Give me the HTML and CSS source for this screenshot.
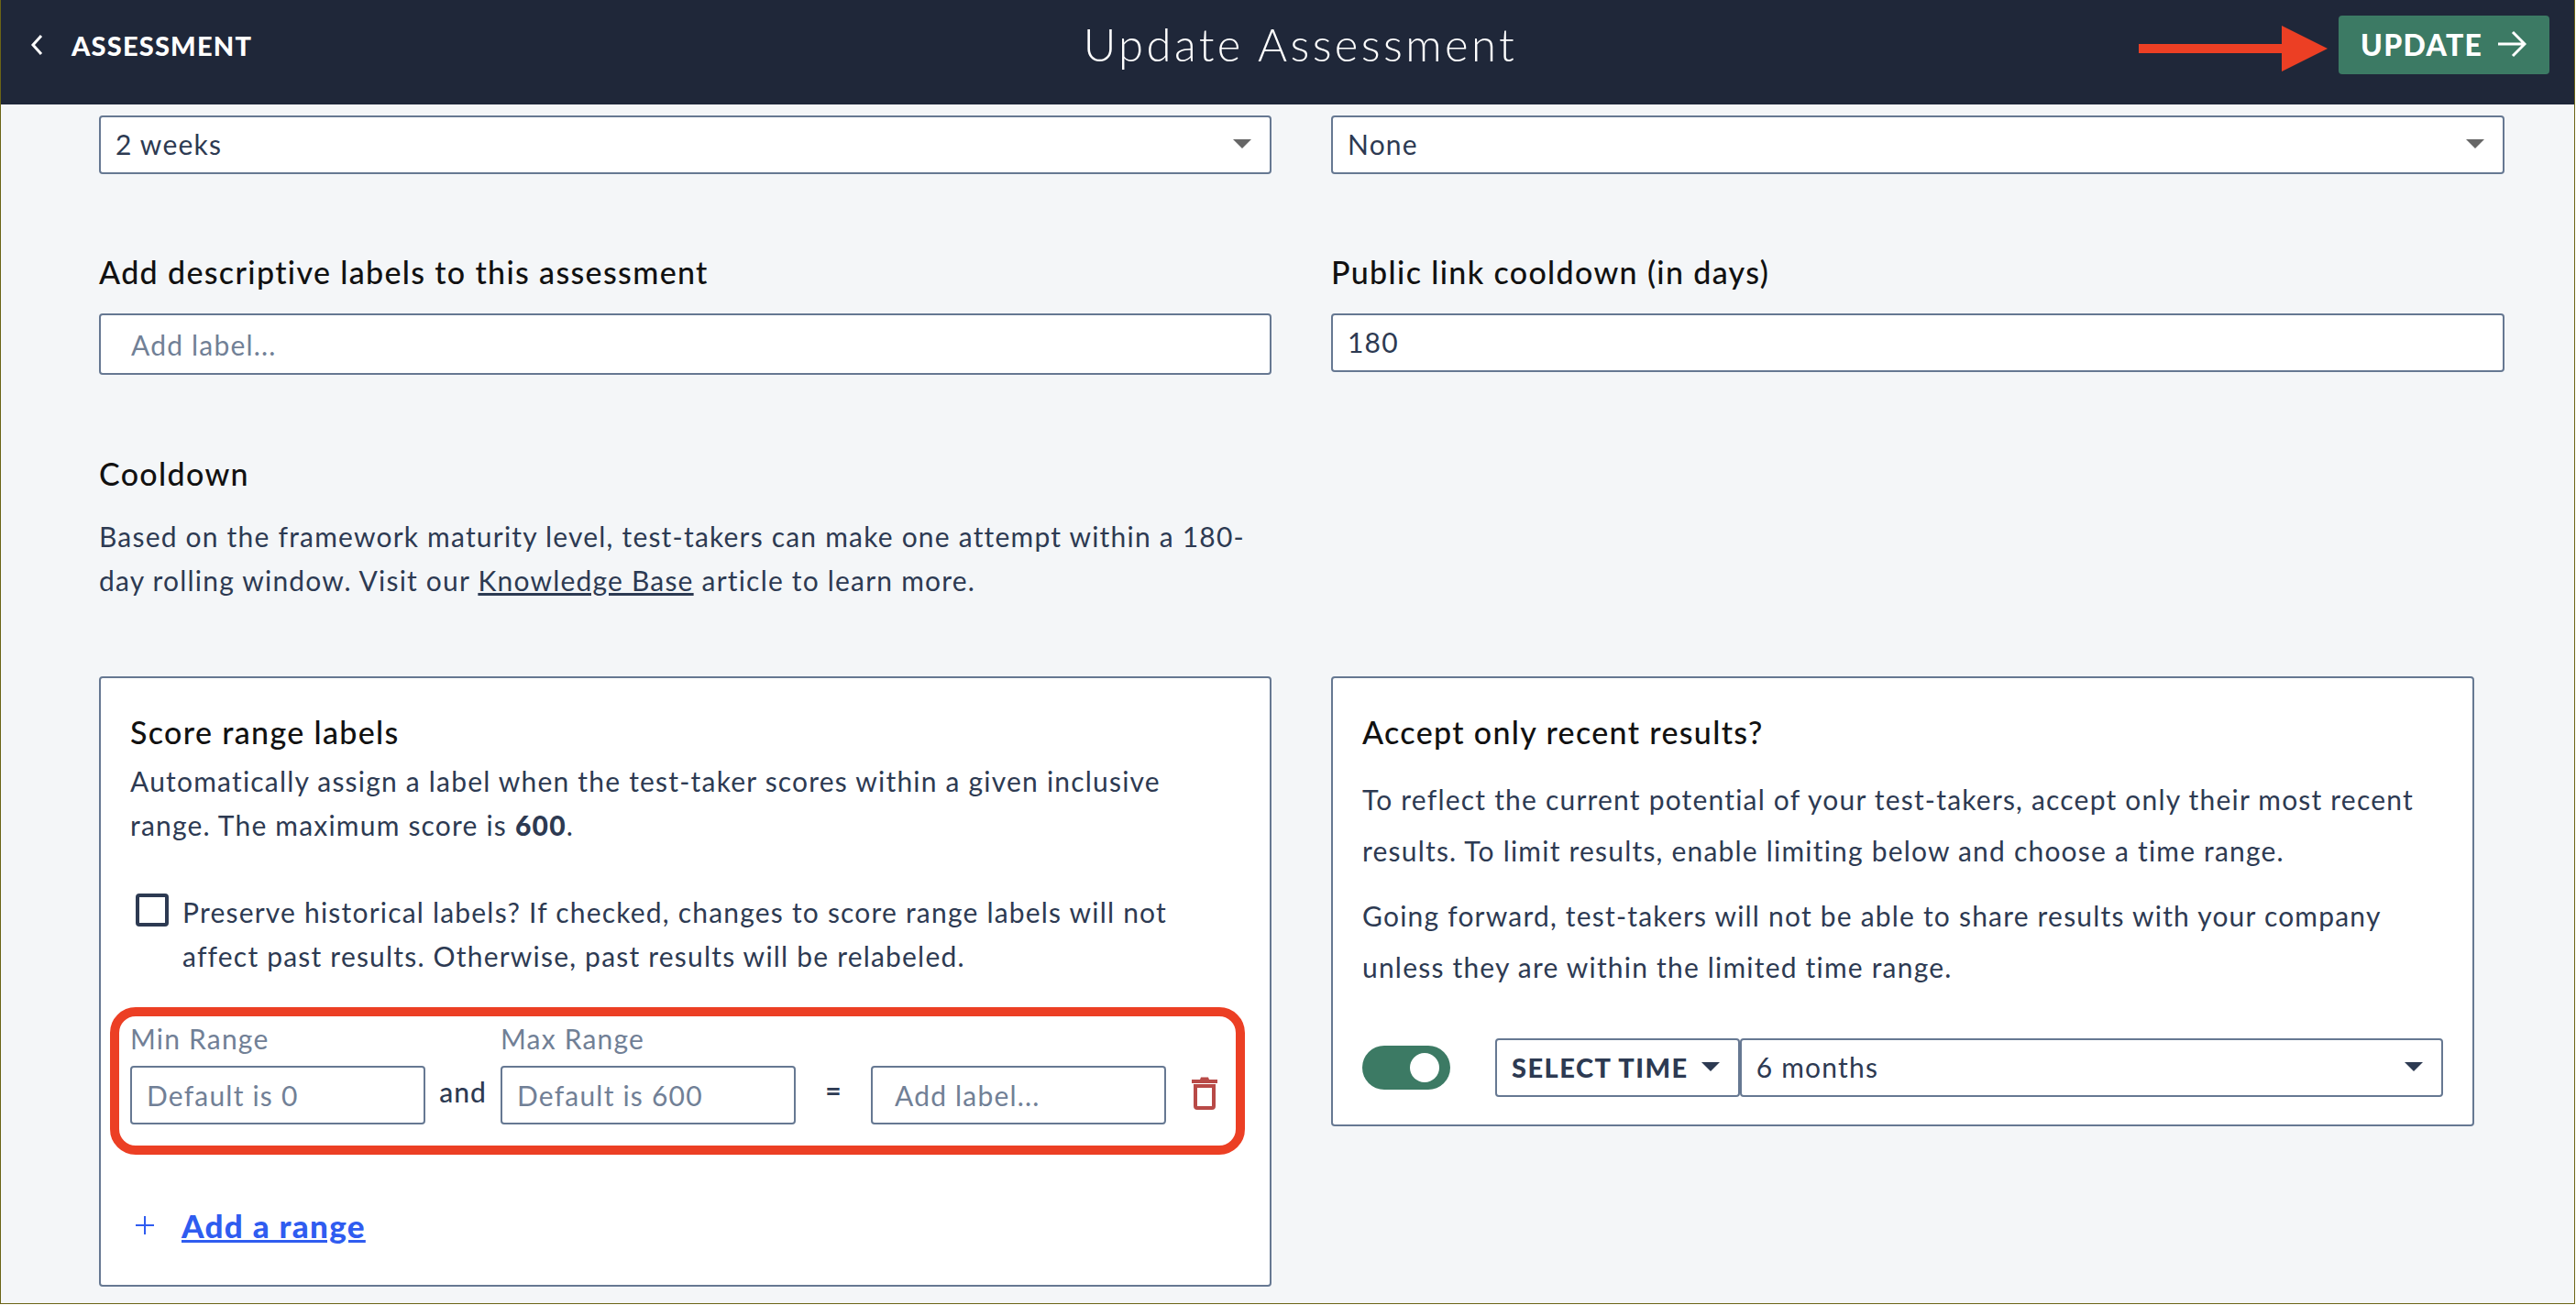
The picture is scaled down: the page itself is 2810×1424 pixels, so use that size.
FILE: index.html
```html
<!DOCTYPE html>
<html lang="en">
<head>
<meta charset="utf-8">
<title>Update Assessment</title>
<link rel="stylesheet" href="styles.css">
</head>
<body>
<div class="frame">
  <header class="topbar">
    <a class="back">
      <svg class="back-icon" width="14" height="24" viewBox="0 0 14 24"><path d="M12 2 3 12l9 10" fill="none" stroke="#fff" stroke-width="3"/></svg>
      <span>ASSESSMENT</span>
    </a>
    <h1 class="title">Update Assessment</h1>
    <button class="update">UPDATE
      <svg width="32" height="30" viewBox="0 0 32 30"><path d="M1 15h28M17 2l13 13-13 13" fill="none" stroke="#fff" stroke-width="3"/></svg>
    </button>
    <svg class="callout-arrow" width="206" height="50" viewBox="0 0 206 50"><path d="M0 20h156V0l50 25-50 25V30H0z" fill="#ec3f24"/></svg>
  </header>
  <main class="content">
    <section class="grid two top-row">
      <div class="select"><span>2 weeks</span><i class="tri grey"></i></div>
      <div class="select"><span>None</span><i class="tri grey"></i></div>
    </section>
    <section class="grid two label-row">
      <div>
        <label class="label">Add descriptive labels to this assessment</label>
        <input class="input tall" placeholder="Add label...">
      </div>
      <div>
        <label class="label">Public link cooldown (in days)</label>
        <input class="input value" value="180">
      </div>
    </section>
    <section class="cooldown">
      <h2 class="label">Cooldown</h2>
      <p class="para">Based on the framework maturity level, test-takers can make one attempt within a 180-day rolling window. Visit our <a class="kb">Knowledge Base</a> article to learn more.</p>
    </section>
    <section class="grid two boxes">
      <div class="box left-box">
        <h3 class="label box-title">Score range labels</h3>
        <p class="para">Automatically assign a label when the test-taker scores within a given inclusive range. The maximum score is <b>600</b>.</p>
        <div class="check-row">
          <span class="check"></span>
          <p class="para">Preserve historical labels? If checked, changes to score range labels will not affect past results. Otherwise, past results will be relabeled.</p>
        </div>
        <div class="range-row">
          <div class="field"><span class="field-label">Min Range</span><input class="input small" placeholder="Default is 0"></div>
          <span class="and">and</span>
          <div class="field"><span class="field-label">Max Range</span><input class="input small" placeholder="Default is 600"></div>
          <span class="eq">=</span>
          <div class="field"><input class="input small wide-pad" placeholder="Add label..."></div>
          <svg class="trash" width="28" height="36" viewBox="0 0 28 36"><path d="M0 3h9l1-2.500h8L19 3h9v4H0z" fill="#b84a47"/><path d="M4 10h20v22a2 2 0 0 1-2 2H6a2 2 0 0 1-2-2z" fill="none" stroke="#b84a47" stroke-width="4"/></svg>
        </div>
        <div class="callout-box"></div>
        <div class="add-range">
          <svg width="20" height="20" viewBox="0 0 20 20"><path d="M10 0v20M0 10h20" stroke="#2f5cf0" stroke-width="2" fill="none"/></svg>
          <a class="add-link">Add a range</a>
        </div>
      </div>
      <div class="box right-box">
        <h3 class="label box-title">Accept only recent results?</h3>
        <p class="para wide first">To reflect the current potential of your test-takers, accept only their most recent results. To limit results, enable limiting below and choose a time range.</p>
        <p class="para wide">Going forward, test-takers will not be able to share results with your company unless they are within the limited time range.</p>
        <div class="limit-row">
          <span class="toggle"><span class="knob"></span></span>
          <div class="time-btn"><span>SELECT TIME</span><i class="tri dark"></i></div>
          <div class="select months"><span>6 months</span><i class="tri dark"></i></div>
        </div>
      </div>
    </section>
  </main>
</div>
</body>
</html>
```
FILE: styles.css
```css
* { box-sizing: border-box; }
html, body { margin: 0; background: #fff; }
body { font-family: Lato, "Open Sans", sans-serif; color: #2d3a52; }
.frame {
  position: relative;
  width: 2809px;
  height: 1423px;
  background: #f4f6f8;
  border: 1px solid #6b6416;
  border-top: 0;
  overflow: hidden;
}
.topbar {
  position: relative;
  height: 114px;
  background: #1f2739;
  display: flex;
  align-items: center;
  justify-content: space-between;
  padding: 0 27px 16px 32px;
  color: #fff;
}
.back { display: flex; align-items: center; gap: 31px; font-size: 29px; font-weight: 900; letter-spacing: 1.2px; }
.title {
  position: absolute;
  left: 0; right: 0; top: 19px;
  margin: 0;
  text-align: center;
  font-size: 49px;
  line-height: 58px;
  font-weight: 300;
  letter-spacing: 3.4px;
  padding-left: 28px;
}
.update {
  width: 230px;
  height: 64px;
  background: #3c7a64;
  color: #fff;
  border: 0;
  border-radius: 4px;
  font: 900 32px Lato, sans-serif;
  letter-spacing: 1.3px;
  display: flex;
  align-items: center;
  gap: 16px;
  padding: 0 0 2px 24px;
}
.callout-arrow { position: absolute; left: 2332px; top: 28px; }
.content { padding: 12px 75px 0 107px; }
.grid.two { display: grid; grid-template-columns: 1279px 1280px; column-gap: 65px; }
.select {
  height: 64px;
  background: #fff;
  border: 2px solid #667892;
  border-radius: 4px;
  display: flex;
  align-items: center;
  justify-content: space-between;
  padding: 0 20px 2px 16px;
  font-size: 30px;
  letter-spacing: 1.2px;
}
.tri { width: 0; height: 0; border-left: 10px solid transparent; border-right: 10px solid transparent; border-top: 10px solid; }
.tri.grey { border-top-color: #666; }
.tri.dark { border-top-color: #2d3a52; }
.label-row { margin-top: 83px; }
.label {
  display: block;
  margin: 0;
  font-size: 34px;
  line-height: 48px;
  font-weight: 500;
  color: #111;
  letter-spacing: 1.34px;
}
.input {
  display: block;
  width: 100%;
  height: 64px;
  margin-top: 21px;
  background: #fff;
  border: 2px solid #667892;
  border-radius: 4px;
  padding: 0 33px;
  font: 400 30px Lato, sans-serif;
  letter-spacing: 1.2px;
  color: #2d3a52;
  outline: 0;
}
.input::placeholder { color: #718096; opacity: 1; }
.input.tall { height: 67px; }
.input.value { padding: 0 16px 2px; }
.cooldown { margin-top: 84px; }
.para {
  margin: 20px 0 0;
  font-size: 30px;
  line-height: 48px;
  letter-spacing: 1.2px;
  max-width: 1250px;
  color: #2d3a52;
}
.para b { font-weight: 900; }
.kb { text-decoration: underline; }
.boxes { margin-top: 81px; align-items: start; }
.box {
  position: relative;
  background: #fff;
  border: 2px solid #667892;
  border-radius: 4px;
  padding: 35px 32px 0;
}
.left-box { height: 666px; }
.right-box { height: 491px; width: 1247px; }
.left-box > .para { margin-top: 5px; max-width: 1190px; }
.check-row { display: flex; gap: 15px; margin: 47px 0 0 6px; }
.check { flex: none; width: 36px; height: 36px; border: 4px solid #2d3a52; border-radius: 4px; margin-top: 4px; }
.check-row .para { margin-top: 0; }
.range-row { display: flex; align-items: flex-end; margin-top: 46px; height: 114px; }
.field { display: flex; flex-direction: column; width: 322px; }
.field-label { font-size: 30px; line-height: 40px; color: #718096; letter-spacing: 1.2px; margin-bottom: 10px; }
.input.small { margin-top: 0; padding: 0 16px; }
.input.small.wide-pad { padding: 0 24px; }
.and { width: 82px; text-align: center; font-size: 30px; line-height: 64px; font-weight: 500; padding-bottom: 4px; letter-spacing: 1px; }
.eq { width: 82px; text-align: center; font-size: 30px; line-height: 64px; font-weight: 700; padding-bottom: 6px; }
.trash { margin: 0 0 16px 28px; }
.callout-box {
  position: absolute;
  left: 10px; top: 359px;
  width: 1238px; height: 161px;
  border: 10px solid #ec3f24;
  border-radius: 28px;
}
.add-range { display: flex; align-items: center; gap: 30px; margin: 88px 0 0 6px; }
.add-link { font-size: 35px; line-height: 44px; font-weight: 900; color: #2f5cf0; text-decoration: underline; letter-spacing: 1.3px; }
.right-box .para.wide { line-height: 55.5px; max-width: 1190px; margin-top: 16px; }
.right-box .para.first { margin-top: 22px; }
.limit-row { display: flex; align-items: center; margin-top: 50px; }
.toggle { width: 96px; height: 48px; border-radius: 24px; background: #3c7a64; display: flex; justify-content: flex-end; align-items: center; padding-right: 12px; margin-right: 49px; }
.knob { width: 32px; height: 32px; border-radius: 50%; background: #fff; }
.time-btn {
  width: 267px; height: 64px;
  border: 2px solid #667892;
  border-radius: 4px;
  display: flex; align-items: center; justify-content: space-between;
  padding: 0 20px 2px 16px;
  font-size: 29px; font-weight: 900; letter-spacing: 1.5px;
}
.select.months { width: 768px; }
```
